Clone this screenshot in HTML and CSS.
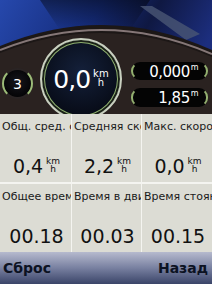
FILE: index.html
```html
<!DOCTYPE html>
<html>
<head>
<meta charset="utf-8">
<link rel="stylesheet" href="styles.css">
</head>
<body>
<div class="screen">
  <div class="dash">
    <svg class="dash-bg" width="212" height="114" viewBox="0 0 212 114">
      <defs>
        <linearGradient id="sky" x1="0" y1="0" x2="1" y2="0.3">
          <stop offset="0" stop-color="#2648ac"/>
          <stop offset="0.45" stop-color="#152c7c"/>
          <stop offset="0.7" stop-color="#0f1842"/>
          <stop offset="1" stop-color="#1c2e7e"/>
        </linearGradient>
        <linearGradient id="shade" x1="0" y1="0" x2="0" y2="1">
          <stop offset="0" stop-color="#000" stop-opacity="0.45"/>
          <stop offset="1" stop-color="#000" stop-opacity="0"/>
        </linearGradient>
      </defs>
      <rect width="212" height="114" fill="url(#sky)"/>
      <path d="M40,0 L150,0 L130,30 L60,30 Z" fill="url(#shade)"/>
      <path d="M140,6 L152,6 L200,34 L186,40 Z" fill="#4a5674" opacity="0.8"/>
      <path d="M0,46 Q106,2 212,50 L212,114 L0,114 Z" fill="#1c1716"/>
      <path d="M0,50 Q106,8 212,54" fill="none" stroke="#857777" stroke-width="2"/>
      <path d="M0,53 Q106,11 212,57 L212,114 L0,114 Z" fill="#2a2220"/>
    </svg>
    <div class="gauges">
      <div class="mini"><span>3</span></div>
      <div class="speedo">
        <span class="big">0,0</span>
        <span class="unit big-unit"><span>km</span><span>h</span></span>
      </div>
      <div class="pills">
        <div class="pill">0,000<sup>m</sup></div>
        <div class="pill">1,85<sup>m</sup></div>
      </div>
    </div>
  </div>
  <div class="grid">
    <div class="cell"><div class="label">Общ. сред. скорость</div><div class="value">0,4<span class="unit"><span>km</span><span>h</span></span></div></div>
    <div class="cell"><div class="label">Средняя скорость</div><div class="value">2,2<span class="unit"><span>km</span><span>h</span></span></div></div>
    <div class="cell"><div class="label">Макс. скорость</div><div class="value">0,0<span class="unit"><span>km</span><span>h</span></span></div></div>
    <div class="cell"><div class="label">Общее время</div><div class="value">00.18</div></div>
    <div class="cell"><div class="label">Время в движении</div><div class="value">00.03</div></div>
    <div class="cell"><div class="label">Время стоянки</div><div class="value">00.15</div></div>
  </div>
  <div class="bar"><span>Сброс</span><span>Назад</span></div>
</div>
</body>
</html>
```
FILE: styles.css
```css
* { box-sizing: border-box; }
html, body { margin: 0; padding: 0; }
body { width: 212px; height: 284px; overflow: hidden; font-family: "DejaVu Sans", sans-serif; }
.screen { width: 212px; height: 284px; display: flex; flex-direction: column; background: #f2f2ee; }
.dash { position: relative; height: 114px; overflow: hidden; flex: none; }
.dash-bg { position: absolute; left: 0; top: 0; }
.gauges { position: relative; display: flex; align-items: flex-start; }
.mini {
  margin: 68px 0 0 2px; width: 31px; height: 31px; border-radius: 50%;
  background: radial-gradient(circle at 50% 45%, #16161c, #050507 70%);
  border: 2px solid #2a2424; border-left-color: #9cbb78; border-right-color: #9cbb78;
  display: flex; align-items: center; justify-content: center;
  color: #fff; font-size: 14px;
}
.speedo {
  margin: 38px 0 0 7px; width: 82px; height: 82px; border-radius: 50%; flex: none;
  border: 2px solid #c9d0c0;
  box-shadow: inset 0 0 0 2px #1a2018, inset 0 0 0 3px #8fb070;
  background: radial-gradient(circle at 50% 40%, #14203a, #070b16 75%);
  display: flex; justify-content: center; align-items: flex-start; padding-top: 28px;
  color: #fff;
}
.big { font-size: 25px; line-height: 24px; letter-spacing: -1px; }
.unit { display: inline-flex; flex-direction: column; align-items: center; font-size: 9px; line-height: 8px; margin-left: 3px; }
.big-unit { font-size: 10px; line-height: 9px; margin-top: 1px; }
.pills { margin: 62px 0 0 9px; display: flex; flex-direction: column; gap: 8px; }
.pill {
  width: 77px; height: 18px; border-radius: 9px; background: #040404;
  border: 2px solid #040404; border-left-color: #94b070; border-right-color: #94b070;
  color: #fff; font-size: 15px; line-height: 16px; text-align: right; padding-right: 8px;
  letter-spacing: -0.5px;
}
.pill + .pill { height: 19px; }
.pill sup { font-size: 8px; vertical-align: top; line-height: 8px; margin-left: 1px; }
.grid {
  height: 138px; flex: none;
  display: grid; grid-template-columns: 71px 69px 1fr; grid-template-rows: 68px 68px; gap: 2px 1px;
  background: #f4f4f0;
}
.cell { background: #dcdcd4; overflow: hidden; padding: 6px 0 0 2px; min-width: 0; }
.label { font-size: 11px; line-height: 13px; white-space: nowrap; overflow: hidden; color: #1a1a1a; }
.value { display: flex; justify-content: center; align-items: flex-start; margin-top: 23px; font-size: 19px; line-height: 20px; color: #111; }
.value .unit { margin-top: 1px; }
.bar {
  flex: 1; display: flex; justify-content: space-between; align-items: center;
  background: linear-gradient(#b6bace, #7880a0 50%, #3a4468);
  padding: 0 4px 0 3px; font-weight: bold; font-size: 14px; color: #0c1222;
}
```
